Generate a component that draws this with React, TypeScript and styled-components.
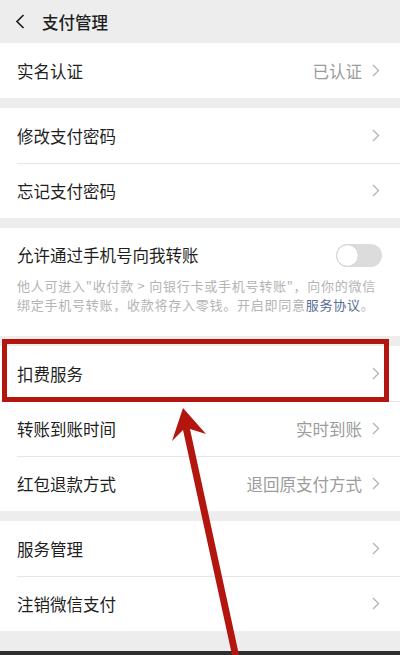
import * as React from 'react';
import styled, { createGlobalStyle } from 'styled-components';

const pageBg = '#ededed';
const textColor = '#1f1f1f';
const subColor = '#9c9c9c';
const lineColor = '#e6e6e6';
const markRed = '#b3160f';

const GlobalStyle = createGlobalStyle`
    * {
        box-sizing: border-box;
    }

    body {
        margin: 0;
        background: ${pageBg};
        font-family: 'Noto Sans CJK SC', 'Noto Sans', sans-serif;
        color: ${textColor};
    }
`;

const Screen = styled.div`
    position: relative;
    width: 400px;
    height: 655px;
    overflow: hidden;
    background: ${pageBg};
    display: flex;
    flex-direction: column;
`;

const NavBar = styled.header`
    height: 43px;
    display: flex;
    align-items: center;
    padding-left: 15px;
    gap: 17px;
    font-size: 16.5px;
    font-weight: 500;
`;

const Group = styled.section`
    background: #fff;
    margin-bottom: 10px;
`;

const Row = styled.div`
    height: 55px;
    display: flex;
    align-items: center;
    padding: 0 20px 0 17px;
    position: relative;
    font-size: 16.5px;

    & + &::before {
        content: "";
        position: absolute;
        top: 0;
        left: 17px;
        right: 0;
        border-top: 1px solid ${lineColor};
    }
`;

const Label = styled.span`
    flex: 1;
`;

const Value = styled.span`
    color: ${subColor};
    margin-right: 10px;
`;

const SwitchBlock = styled.div`
    padding: 14px 18px 22px 17px;
`;

const SwitchHead = styled.div`
    display: flex;
    align-items: center;
    justify-content: space-between;
    font-size: 16.5px;
    height: 26px;
`;

const Desc = styled.p`
    margin: 8px 0 0;
    font-size: 13px;
    line-height: 19px;
    letter-spacing: 0.75px;
    color: #b4b4b4;
    white-space: nowrap;
`;

const Link = styled.span`
    color: #576b95;
`;

const Toggle = styled.span`
    width: 46px;
    height: 23px;
    border-radius: 12px;
    background: #dcdcdc;
    position: relative;

    &::after {
        content: "";
        position: absolute;
        left: 1px;
        top: 1px;
        width: 21px;
        height: 21px;
        border-radius: 50%;
        background: #fff;
        box-shadow: 0 0 1px rgba(0, 0, 0, 0.25);
    }
`;

const Filler = styled.div`
    flex: 1;
`;

const BottomBar = styled.div`
    height: 4px;
    background: #2e2e2e;
`;

const Marks = styled.svg`
    position: absolute;
    left: 0;
    top: 0;
    pointer-events: none;
`;

const Chevron = () => (
    <svg width="8" height="13" viewBox="0 0 8 13">
        <path d="M1 1l5.5 5.5L1 12" fill="none" stroke="#b5b5b5" strokeWidth="1.4" />
    </svg>
);

const BackIcon = () => (
    <svg width="10" height="15" viewBox="0 0 10 15">
        <path d="M8.5 1L2 7.5l6.5 6.5" fill="none" stroke="#1f1f1f" strokeWidth="1.7" />
    </svg>
);

const Item: React.FC<{ label: string; value?: string }> = ({ label, value }) => (
    <Row>
        <Label>{label}</Label>
        {value && <Value>{value}</Value>}
        <Chevron />
    </Row>
);

export default function App() {
    return (
        <Screen>
            <GlobalStyle />
            <NavBar>
                <BackIcon />
                <span>支付管理</span>
            </NavBar>
            <Group>
                <Item label="实名认证" value="已认证" />
            </Group>
            <Group>
                <Item label="修改支付密码" />
                <Item label="忘记支付密码" />
            </Group>
            <Group>
                <SwitchBlock>
                    <SwitchHead>
                        <span>允许通过手机号向我转账</span>
                        <Toggle />
                    </SwitchHead>
                    <Desc>
                        他人可进入"收付款 &gt; 向银行卡或手机号转账"，向你的微信
                        <br />
                        绑定手机号转账，收款将存入零钱。开启即同意<Link>服务协议</Link>。
                    </Desc>
                </SwitchBlock>
            </Group>
            <Group>
                <Item label="扣费服务" />
                <Item label="转账到账时间" value="实时到账" />
                <Item label="红包退款方式" value="退回原支付方式" />
            </Group>
            <Group>
                <Item label="服务管理" />
                <Item label="注销微信支付" />
            </Group>
            <Filler />
            <BottomBar />
            <Marks width="400" height="655" viewBox="0 0 400 655">
                <rect x="4.5" y="341.5" width="382" height="58" fill="none" stroke={markRed} strokeWidth="5" />
                <path d="M183 408 L206 434 L190 429 L239 655 L232 655 L183 430 L172 441 Z" fill={markRed} />
            </Marks>
        </Screen>
    );
}
